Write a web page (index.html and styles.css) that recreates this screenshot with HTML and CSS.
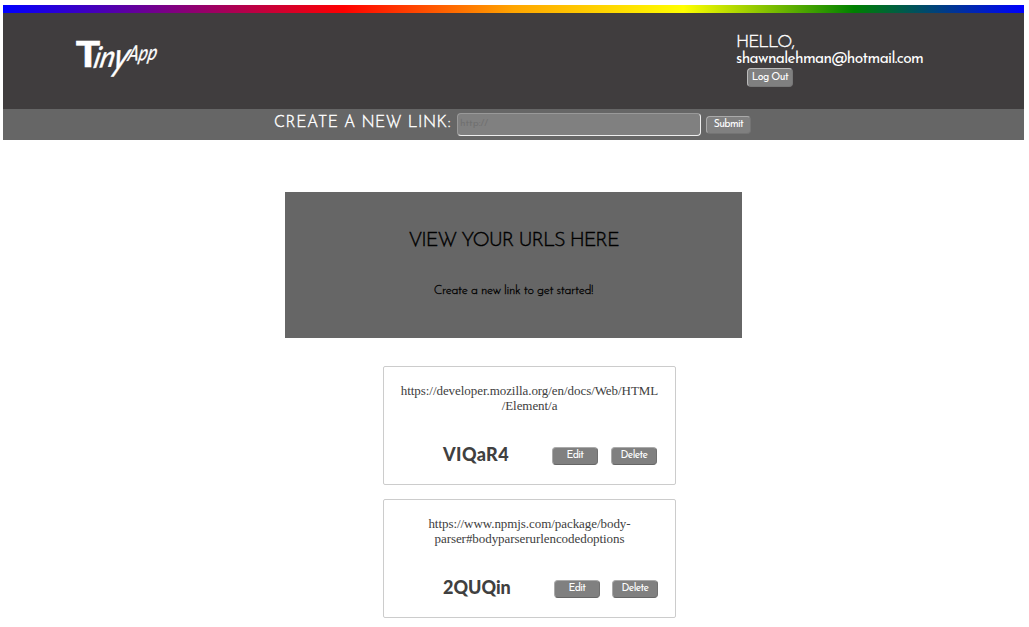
FILE: index.html
```html
<!DOCTYPE html>
<html lang="en">
<head>
<meta charset="utf-8">
<title>TinyApp</title>
<link rel="stylesheet" href="styles.css">
</head>
<body>
<div class="rainbow"></div>
<header class="header">
  <svg class="logo" width="86" height="44" viewBox="0 0 86 44" role="img" aria-label="TinyApp">
    <g class="logo-text">
      <text class="logo-t" x="1" y="28.5" textLength="24" lengthAdjust="spacingAndGlyphs">T</text>
      <text class="logo-iny" transform="translate(17.5 30) rotate(-4) skewX(-16)" textLength="21" lengthAdjust="spacingAndGlyphs">in</text>
      <text class="logo-y" transform="translate(36 32) rotate(-3) skewX(-18)" textLength="15" lengthAdjust="spacingAndGlyphs">y</text>
      <text class="logo-app" transform="translate(52 23) rotate(-3) skewX(-14)" textLength="29" lengthAdjust="spacingAndGlyphs">App</text>
    </g>
  </svg>
  <div class="account">
    <div class="hello">HELLO,</div>
    <div class="email">shawnalehman@hotmail.com</div>
    <button class="btn logout">Log Out</button>
  </div>
</header>
<form class="create">
  <label class="create-label" for="url">CREATE A NEW LINK:</label>
  <input class="create-input" id="url" type="text" placeholder="http://">
  <button class="btn submit" type="button">Submit</button>
</form>
<main class="main">
  <section class="intro">
    <h1 class="intro-title">VIEW YOUR URLS HERE</h1>
    <p class="intro-text">Create a new link to get started!</p>
  </section>
  <article class="card">
    <a class="card-url">https://developer.mozilla.org/en/docs/Web/HTML<br>/Element/a</a>
    <div class="card-row">
      <strong class="code code-a">VIQaR4</strong>
      <button class="btn edit-a">Edit</button>
      <button class="btn">Delete</button>
    </div>
  </article>
  <article class="card">
    <a class="card-url">https://www.npmjs.com/package/body-<br>parser#bodyparserurlencodedoptions</a>
    <div class="card-row">
      <strong class="code code-b">2QUQin</strong>
      <button class="btn edit-b">Edit</button>
      <button class="btn">Delete</button>
    </div>
  </article>
</main>
</body>
</html>
```
FILE: styles.css
```css
* { box-sizing: border-box; }
body {
  margin: 0;
  padding: 5px 5px 0 3px;
  background: #fff;
  font-family: "Josefin Sans", Lato, sans-serif;
  overflow: hidden;
}
.rainbow {
  height: 8px;
  background: linear-gradient(to right, blue, purple, red, orange, yellow, green, blue);
}
.header {
  display: flex;
  justify-content: space-between;
  align-items: flex-start;
  height: 96px;
  padding: 0 100px 0 72px;
  background: #403d3e;
  color: #fff;
}
.logo { margin-top: 25px; overflow: visible; }
.logo-text { fill: #fff; }
.logo-t { font: 900 37px "Liberation Sans", sans-serif; stroke: #fff; stroke-width: .7; }
.logo-iny { font: italic 400 29px Lato, sans-serif; stroke: #fff; stroke-width: .5; }
.logo-y { font: italic 400 38px Lato, sans-serif; stroke: #fff; stroke-width: .5; }
.logo-app { font: italic 400 21px Lato, sans-serif; stroke: #fff; stroke-width: .3; }
.account { width: 200px; padding: 20px 0 0 12px; white-space: nowrap; }
.hello { font-size: 17.5px; font-weight: 300; line-height: 19px; letter-spacing: -1px; -webkit-text-stroke: .4px #fff; }
.email { font-size: 15.5px; font-weight: 400; line-height: 15px; letter-spacing: -.63px; }
.btn {
  display: block;
  flex: none;
  width: 46px;
  height: 18px;
  padding: 0 0 2px;
  border: 1px solid;
  border-color: #aaa #707070 #666 #aaa;
  border-radius: 4px;
  background: #808080;
  color: #fff;
  font: 10.5px/13px "Josefin Sans", Lato, sans-serif;
  letter-spacing: -.65px;
  text-align: center;
  white-space: nowrap;
}
.logout { height: 19px; margin: 1px 0 0 11px; padding-bottom: 1px; border-color: #bbb #777 #777 #bbb; letter-spacing: -.58px; }
.create {
  display: flex;
  align-items: flex-start;
  height: 31px;
  padding-left: 271px;
  background: #666;
}
.create-label {
  flex: none;
  width: 183px;
  padding-top: 4px;
  color: #fff;
  font-size: 16px;
  font-weight: 300;
  line-height: 20px;
  letter-spacing: .55px;
  white-space: nowrap;
  -webkit-text-stroke: .4px #fff;
}
.create-input {
  flex: none;
  width: 244px;
  height: 23px;
  margin: 4px 5px 0 0;
  padding: 0 2px 2px;
  border: 1px solid;
  border-color: #999 #eee #eee #999;
  border-radius: 4px;
  background: #808080;
  font: 400 10px "Josefin Sans", Lato, sans-serif;
}
.create-input::placeholder { color: #707070; opacity: 1; }
.submit { width: 45px; margin-top: 7px; border-color: #aaa #747474 #747474 #aaa; letter-spacing: -.6px; }
.main { padding-top: 52px; }
.intro {
  width: 457px;
  height: 146px;
  margin: 0 0 28px 282px;
  padding-top: 37px;
  background: #666;
  color: #000;
  text-align: center;
}
.intro-title { margin: 0; font-size: 20px; font-weight: 300; line-height: 24px; letter-spacing: -1.08px; -webkit-text-stroke: .4px #000; }
.intro-text { margin: 28px 0 0; font-size: 12.5px; font-weight: 300; line-height: 20px; letter-spacing: -.37px; -webkit-text-stroke: .3px #000; }
.card {
  width: 293px;
  height: 119px;
  margin: 0 0 14px 380px;
  padding-top: 16px;
  border: 1px solid #ccc;
  border-radius: 2px;
  color: #404040;
}
.card-url {
  display: block;
  height: 64px;
  font: 13px/15px "Times New Roman", "Liberation Serif", serif;
  letter-spacing: -.06px;
  text-align: center;
  white-space: nowrap;
}
.card-row { display: flex; align-items: flex-start; padding-left: 59px; }
.code { flex: none; font: 900 18px/14px Lato, sans-serif; white-space: nowrap; }
.code-a { width: 109px; letter-spacing: .4px; }
.code-b { width: 111px; }
.edit-a { margin-right: 13px; }
.edit-b { margin-right: 12px; }
```
